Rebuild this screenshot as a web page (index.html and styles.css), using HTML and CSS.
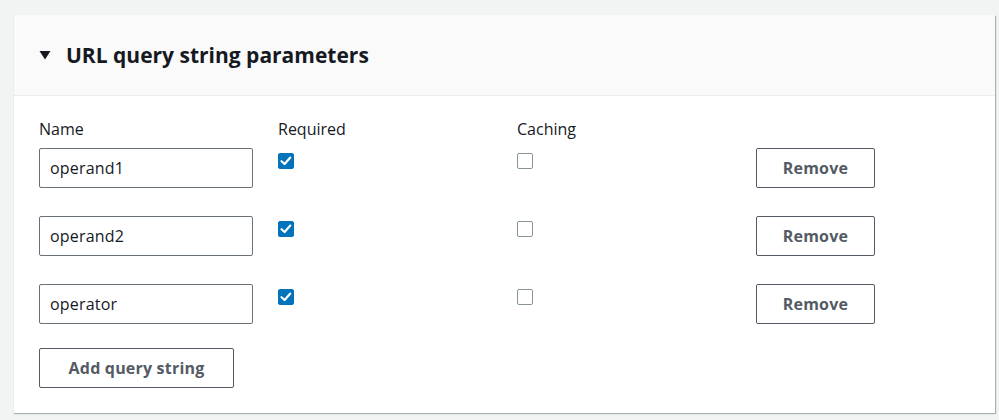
FILE: index.html
```html
<!DOCTYPE html>
<html>
<head>
<meta charset="utf-8">
<link rel="stylesheet" href="styles.css">
</head>
<body>
<div class="page">
  <section class="panel">
    <header class="panel-head">
      <svg class="caret" width="12" height="10" viewBox="0 0 12 10"><path d="M0.5 1 L11.5 1 L6 9.5 Z" fill="#16191f"/></svg>
      <h2 class="title">URL query string parameters</h2>
    </header>
    <div class="panel-body">
      <div class="row head">
        <div class="label">Name</div>
        <div class="label">Required</div>
        <div class="label">Caching</div>
        <div></div>
      </div>
      <div class="row">
        <div class="input">operand1</div>
        <div class="cell"><span class="cb on"><svg width="16" height="16" viewBox="0 0 16 16"><path d="M3.5 8.2 L6.6 11 L12.3 4.6" fill="none" stroke="#fff" stroke-width="2.2" stroke-linecap="round" stroke-linejoin="round"/></svg></span></div>
        <div class="cell"><span class="cb"></span></div>
        <div><button class="btn">Remove</button></div>
      </div>
      <div class="row">
        <div class="input">operand2</div>
        <div class="cell"><span class="cb on"><svg width="16" height="16" viewBox="0 0 16 16"><path d="M3.5 8.2 L6.6 11 L12.3 4.6" fill="none" stroke="#fff" stroke-width="2.2" stroke-linecap="round" stroke-linejoin="round"/></svg></span></div>
        <div class="cell"><span class="cb"></span></div>
        <div><button class="btn">Remove</button></div>
      </div>
      <div class="row">
        <div class="input">operator</div>
        <div class="cell"><span class="cb on"><svg width="16" height="16" viewBox="0 0 16 16"><path d="M3.5 8.2 L6.6 11 L12.3 4.6" fill="none" stroke="#fff" stroke-width="2.2" stroke-linecap="round" stroke-linejoin="round"/></svg></span></div>
        <div class="cell"><span class="cb"></span></div>
        <div><button class="btn">Remove</button></div>
      </div>
      <button class="btn add">Add query string</button>
    </div>
  </section>
</div>
</body>
</html>
```

FILE: styles.css
```css
html, body {
  margin: 0;
  padding: 0;
  background: #f2f3f3;
  font-family: "Open Sans", "Noto Sans", sans-serif;
  color: #16191f;
}
.page {
  padding: 15px 4px 0 13px;
  height: 405px;
}
.panel {
  background: #fff;
  border-left: 1px solid #eaeded;
  box-shadow: 1px 1px 1px 0 rgba(0, 28, 36, 0.3);
  height: 398px;
  box-sizing: border-box;
}
.panel-head {
  display: flex;
  align-items: center;
  gap: 15px;
  height: 81px;
  padding-left: 25px;
  background: #fafafa;
  border-bottom: 1px solid #eaeded;
  box-sizing: border-box;
}
.title {
  margin: 0;
  font-size: 21px;
  font-weight: 700;
  line-height: 26px;
}
.panel-body {
  padding: 22px 0 0 25px;
  display: flex;
  flex-direction: column;
  align-items: flex-start;
}
.row {
  display: grid;
  grid-template-columns: 215px 215px 215px 120px;
  column-gap: 24px;
  height: 40px;
  margin-bottom: 28px;
}
.row.head {
  height: 30px;
  margin-bottom: 0;
}
.label {
  font-size: 16px;
  line-height: 22px;
}
.input {
  box-sizing: border-box;
  width: 214px;
  height: 40px;
  border: 1px solid #687078;
  border-radius: 2px;
  padding: 0 10px;
  display: flex;
  align-items: center;
  font-size: 16px;
  letter-spacing: 0.2px;
}
.cell {
  padding-top: 5px;
}
.cb {
  display: block;
  width: 16px;
  height: 16px;
  box-sizing: border-box;
  border: 1px solid #879596;
  border-radius: 2px;
  background: #fff;
}
.cb.on {
  background: #0073bb;
  border-color: #0073bb;
}
.cb.on svg { display: block; margin: -1px; }
.btn {
  box-sizing: border-box;
  width: 119px;
  height: 40px;
  border: 1px solid #545b64;
  border-radius: 2px;
  background: #fff;
  color: #545b64;
  font-family: "Open Sans", "Noto Sans", sans-serif;
  font-size: 16px;
  font-weight: 700;
  letter-spacing: 0.2px;
  padding: 0;
  cursor: pointer;
}
.btn.add {
  width: 195px;
  margin-top: -4px;
}
```
